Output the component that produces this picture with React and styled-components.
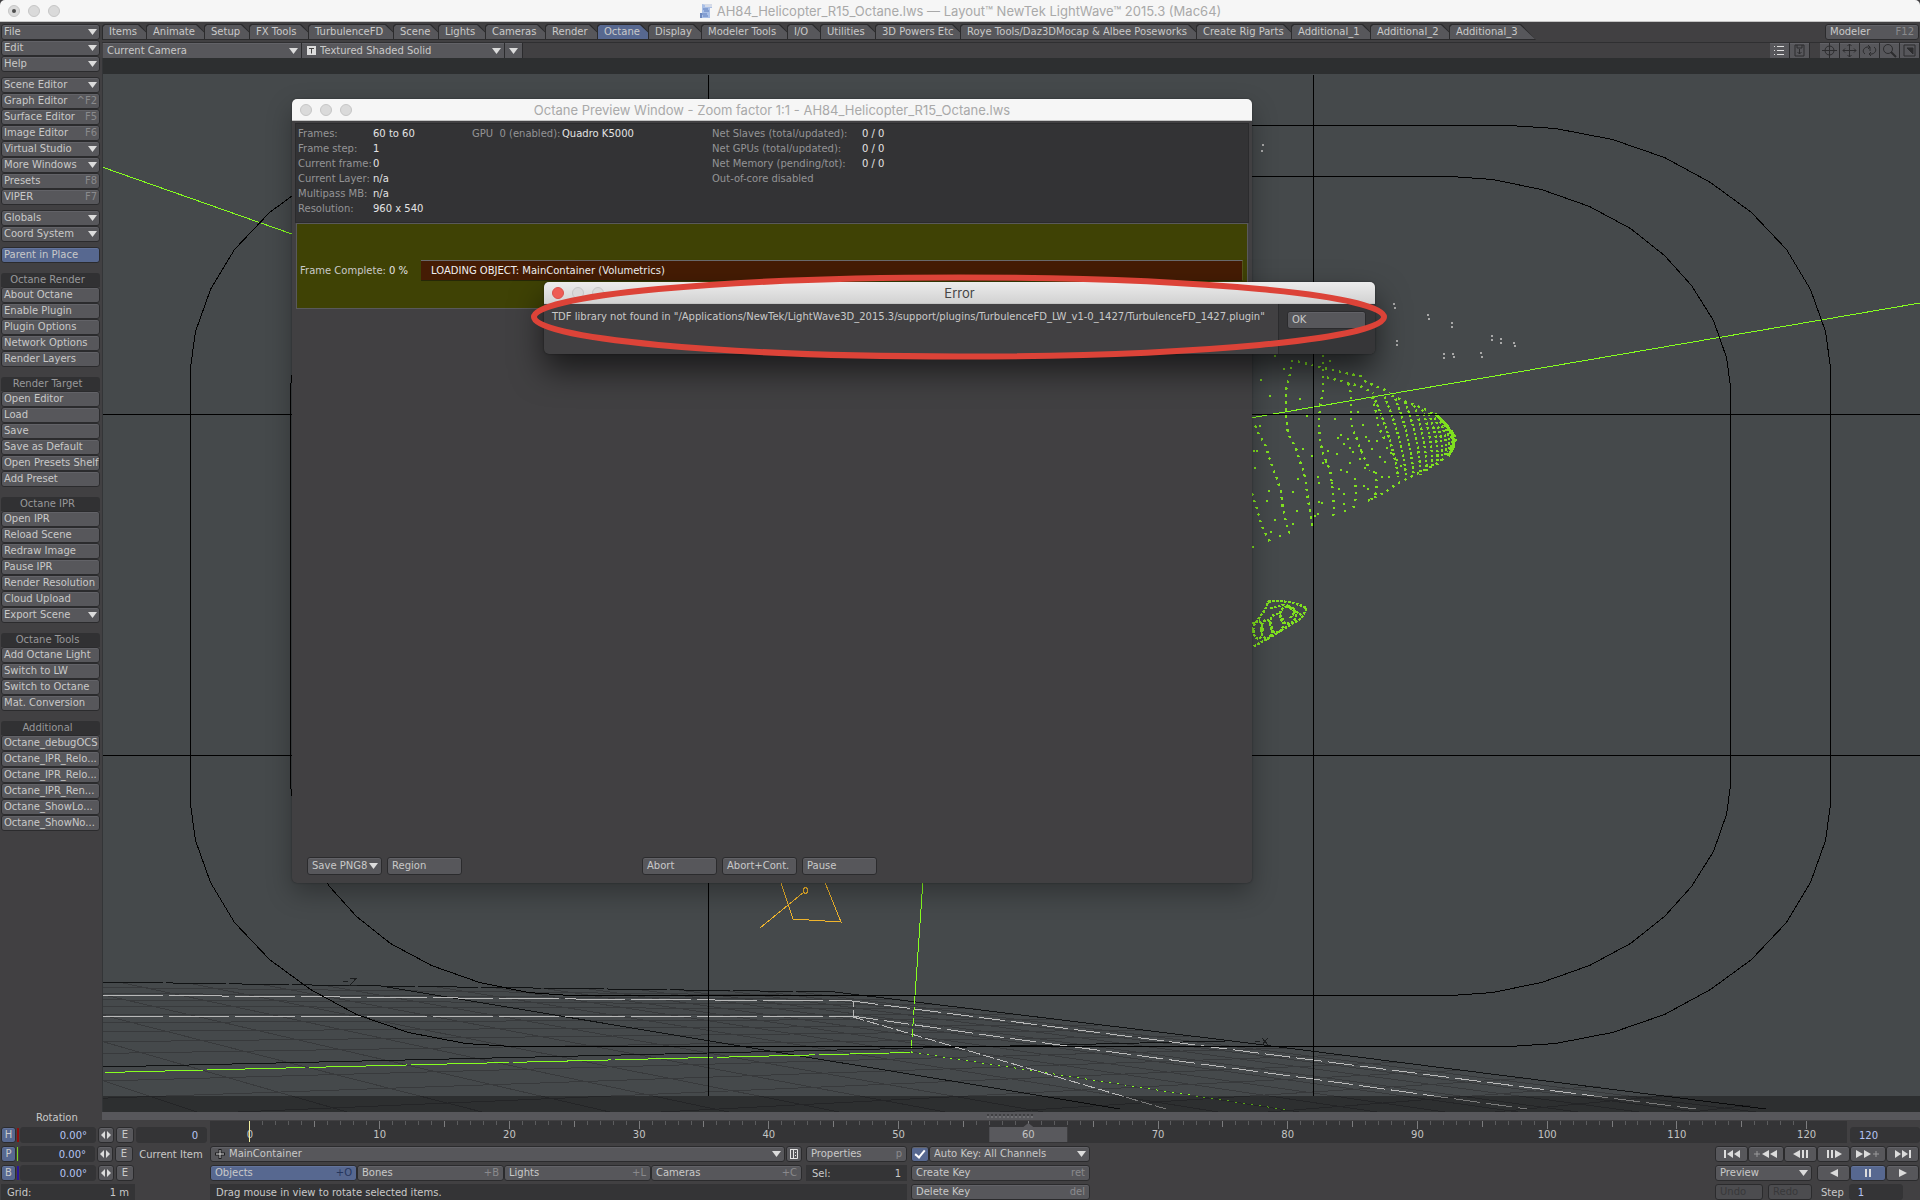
import React from "react"
import styled, { createGlobalStyle, css } from "styled-components"

const PALETTE = {
  PANEL: "#414042",
  DARK: "#343436",
  EDGE: "#2b2b2d",
  BUTTON: "#57575b",
  ACTIVE: "#576890",
  TEXT: "#c9c9c9",
  MUTED: "#8a8a8d",
  VALUE: "#b4c4f4",
  VIEW: "#45494b",
  GREEN: "#7fe01f",
}

const UI_FONT = `"DejaVu Sans", "Noto Sans", sans-serif`
const TITLE_FONT = `Inter, Roboto, sans-serif`

const GlobalStyl = createGlobalStyle`
  * {
    box-sizing: border-box;
  }

  body {
    margin: 0;
    background: ${PALETTE.PANEL};
    font-family: ${UI_FONT};
    font-size: 10px;
    color: ${PALETTE.TEXT};
  }

  button, input, select {
    font: inherit;
    color: inherit;
    margin: 0;
  }
`

const control = css`
  height: 16px;
  border: 1px solid ${PALETTE.EDGE};
  border-radius: 3px;
  background: ${PALETTE.BUTTON};
  box-shadow: inset 0 1px 0 #626267;
  color: ${PALETTE.TEXT};
`

/* ---------- shared controls ---------- */

const ButtonStyl = styled.button`
  ${control}
  display: flex;
  align-items: center;
  justify-content: ${({ $center }) => ($center ? "center" : "space-between")};
  min-width: 0;
  width: ${({ $width }) => ($width ? `${$width}px` : "auto")};
  height: ${({ $tall }) => ($tall ? 18 : 16)}px;
  padding: 0 ${({ $center, $slim }) => ($center ? 0 : $slim ? 2 : 4)}px;
  line-height: 12px;
  white-space: nowrap;
  flex: ${({ $grow }) => ($grow ? "1 1 0" : "none")};

  ${({ $active }) => $active && css`
    background: ${PALETTE.ACTIVE};
    box-shadow: inset 0 1px 0 #63749c;
  `}

  ${({ disabled }) => disabled && css`
    background: #4c4c4f;
    box-shadow: none;
    color: #38383a;
  `}
`

const ShortcutStyl = styled.span`
  color: ${({ $dark }) => ($dark ? "#26365c" : PALETTE.MUTED)};
`

const SelectBoxStyl = styled.label`
  display: grid;
  align-items: center;
  min-width: 0;
  width: ${({ $width }) => ($width ? `${$width}px` : "auto")};
  flex: ${({ $grow }) => ($grow ? "1 1 0" : "none")};

  > * {
    grid-area: 1 / 1;
  }

  > svg {
    pointer-events: none;
    justify-self: end;
    margin-right: 4px;
  }

  > span {
    pointer-events: none;
    display: flex;
    padding-left: 5px;
  }
`

const SelectStyl = styled.select`
  ${control}
  appearance: none;
  width: 100%;
  height: ${({ $tall }) => ($tall ? 18 : 16)}px;
  padding: 0 ${({ $tight }) => ($tight ? 0 : 16)}px 0 ${({ $indent }) => ($indent ? 18 : 4)}px;
  line-height: 12px;
  border-radius: ${({ $square }) => ($square ? 0 : 3)}px;
`

const Arrow = () =>
  <svg width="9" height="6" viewBox="0 0 9 6">
    <path d="M0 0H9L4.5 6Z" fill="#dcdcdc" />
  </svg>

const Select = ({ label, value, icon, width, grow, square, tall, tight }) =>
  <SelectBoxStyl $width={width} $grow={grow}>
    <SelectStyl aria-label={label} $square={square} $indent={!!icon} $tall={tall} $tight={tight}>
      <option>{value}</option>
    </SelectStyl>
    {icon && <span>{icon}</span>}
    <Arrow />
  </SelectBoxStyl>

const FieldStyl = styled.input`
  height: 16px;
  width: ${({ $width }) => $width}px;
  padding: 0 8px;
  border: 1px solid ${PALETTE.DARK};
  border-radius: 3px;
  background: ${PALETTE.DARK};
  color: ${PALETTE.VALUE};
  text-align: ${({ $left }) => ($left ? "left" : "right")};
`

/* ---------- title bars ---------- */

const TitleBarStyl = styled.header`
  display: grid;
  grid-template-columns: 1fr auto 1fr;
  align-items: center;
  height: 22px;
  padding: 0 8px;
  border-radius: 5px 5px 0 0;
  border-bottom: 1px solid #c4c4c4;
  background: ${({ $focused }) => ($focused ? "linear-gradient(#ececec, #d2d2d2)" : "#f6f6f6")};
  color: ${({ $focused }) => ($focused ? "#454545" : "#a9a9a9")};
  font-family: ${TITLE_FONT};
  font-size: 13px;
  line-height: 20px;
`

const LightsStyl = styled.div`
  display: flex;
  gap: 8px;
`

const LightStyl = styled.i`
  display: grid;
  place-items: center;
  width: 12px;
  height: 12px;
  border-radius: 50%;
  border: 1px solid ${({ $red }) => ($red ? "#d9504a" : "#c6c6c6")};
  background: ${({ $red }) => ($red ? "#ee5c54" : "#dadada")};

  &::after {
    content: "";
    display: ${({ $dot }) => ($dot ? "block" : "none")};
    width: 4px;
    height: 4px;
    border-radius: 50%;
    background: #4d4d4d;
  }
`

const TitleStyl = styled.h1`
  display: flex;
  align-items: center;
  gap: 4px;
  margin: 0;
  font-size: inherit;
  font-weight: 400;
  white-space: nowrap;
`

const DocIcon = () =>
  <svg width="14" height="18" viewBox="0 0 14 18">
    <path d="M3 2H13V6H11V16H1V11H3Z" fill="#a9bfe6" />
    <path d="M3 2H13V5H6V3Z" fill="#d5dbe8" />
    <path d="M4 7H9M5 9H10M3 12H8M4 14H9" stroke="#5f7fbe" />
    <path d="M1 11H3V16H1Z" fill="#6d88bd" />
  </svg>

const TitleBar = ({ children, focused, dot, icon }) =>
  <TitleBarStyl $focused={focused}>
    <LightsStyl>
      <LightStyl $red={focused} $dot={dot} />
      <LightStyl />
      <LightStyl />
    </LightsStyl>
    <TitleStyl>{icon}{children}</TitleStyl>
  </TitleBarStyl>

/* ---------- page frame ---------- */

const PageStyl = styled.div`
  position: relative;
  display: flex;
  flex-direction: column;
  height: 100vh;
  overflow: hidden;
  background: ${PALETTE.PANEL};
`

const BodyStyl = styled.div`
  flex: 1;
  min-height: 0;
  display: flex;
`

const SidebarStyl = styled.nav`
  display: flex;
  flex-direction: column;
  flex: none;
  width: 102px;
  padding: 2px 2px 0 1px;
`

const GroupStyl = styled.div`
  display: flex;
  flex-direction: column;
  width: 99px;
  margin-bottom: ${({ $wide }) => ($wide ? 10 : 5)}px;
`

const GroupTitleStyl = styled.h2`
  margin: 0;
  height: 14px;
  padding-right: 6px;
  border-radius: 3px 3px 0 0;
  background: #313133;
  color: #98989a;
  font-size: 10px;
  font-weight: 400;
  line-height: 14px;
  text-align: center;
`

const RotationLabelStyl = styled.div`
  margin-top: auto;
  padding-left: 35px;
  height: 8px;
  line-height: 12px;
`

const MainStyl = styled.main`
  flex: 1;
  min-width: 0;
  display: flex;
  flex-direction: column;
`

const GROUPS = [
  { items: [["File", "v"], ["Edit", "v"], ["Help", "v"]] },
  {
    items: [
      ["Scene Editor", "v"], ["Graph Editor", "^F2"], ["Surface Editor", "F5"], ["Image Editor", "F6"],
      ["Virtual Studio", "v"], ["More Windows", "v"], ["Presets", "F8"], ["VIPER", "F7"],
    ],
  },
  { items: [["Globals", "v"], ["Coord System", "v"]] },
  { items: [["Parent in Place", "", true]], wide: true },
  {
    title: "Octane Render",
    items: [["About Octane"], ["Enable Plugin"], ["Plugin Options"], ["Network Options"], ["Render Layers"]],
    wide: true,
  },
  {
    title: "Render Target",
    items: [["Open Editor"], ["Load"], ["Save"], ["Save as Default"], ["Open Presets Shelf"], ["Add Preset"]],
    wide: true,
  },
  {
    title: "Octane IPR",
    items: [
      ["Open IPR"], ["Reload Scene"], ["Redraw Image"], ["Pause IPR"],
      ["Render Resolution"], ["Cloud Upload"], ["Export Scene", "v"],
    ],
    wide: true,
  },
  {
    title: "Octane Tools",
    items: [["Add Octane Light"], ["Switch to LW"], ["Switch to Octane"], ["Mat. Conversion"]],
    wide: true,
  },
  {
    title: "Additional",
    items: [
      ["Octane_debugOCS"], ["Octane_IPR_Relo..."], ["Octane_IPR_Relo..."],
      ["Octane_IPR_Ren..."], ["Octane_ShowLo..."], ["Octane_ShowNo..."],
    ],
    wide: true,
  },
]

const Sidebar = () =>
  <SidebarStyl>
    {GROUPS.map(({ title, items, wide }, i) =>
      <GroupStyl key={i} $wide={wide}>
        {title && <GroupTitleStyl>{title}</GroupTitleStyl>}
        {items.map(([name, hint, active], j) =>
          <ButtonStyl key={j} $slim $active={active}>
            <span>{name}</span>
            {hint === "v" ? <Arrow /> : hint && <ShortcutStyl>{hint}</ShortcutStyl>}
          </ButtonStyl>
        )}
      </GroupStyl>
    )}
    <RotationLabelStyl>Rotation</RotationLabelStyl>
  </SidebarStyl>

/* ---------- tabs ---------- */

const TabRowStyl = styled.div`
  display: flex;
  align-items: flex-start;
  height: 21px;
  padding: 2px 1px 0 0;
  border-bottom: 1px solid #2f2f31;
`

const TabListStyl = styled.div`
  display: flex;
  flex: 1;
`

const TabStyl = styled.button`
  position: relative;
  z-index: 0;
  flex: none;
  width: ${({ $width }) => $width}px;
  height: 16px;
  padding: 0 0 0 7px;
  border: 0;
  background: none;
  text-align: left;
  line-height: 16px;
  white-space: nowrap;

  &::before,
  &::after {
    content: "";
    position: absolute;
    inset: 0 -8px 0 0;
    clip-path: polygon(2px 0, calc(100% - 15px) 0, 100% 100%, 0 100%, 0 2px);
  }

  &::before {
    z-index: -2;
    background: ${PALETTE.EDGE};
  }

  &::after {
    z-index: -1;
    inset: 1px -7px 1px 1px;
    background: ${({ $active }) => ($active ? PALETTE.ACTIVE : PALETTE.BUTTON)};
  }
`

const TABS = [
  ["Items", 44], ["Animate", 58], ["Setup", 45], ["FX Tools", 59], ["TurbulenceFD", 85], ["Scene", 45],
  ["Lights", 47], ["Cameras", 60], ["Render", 52], ["Octane", 51], ["Display", 53], ["Modeler Tools", 86],
  ["I/O", 33], ["Utilities", 55], ["3D Powers Etc", 85], ["Roye Tools/Daz3DMocap & Albee Poseworks", 236],
  ["Create Rig Parts", 95], ["Additional_1", 79], ["Additional_2", 79], ["Additional_3", 79],
]

const Tabs = () =>
  <TabRowStyl>
    <TabListStyl role="tablist">
      {TABS.map(([name, width]) =>
        <TabStyl key={name} role="tab" aria-selected={name === "Octane"} $width={width} $active={name === "Octane"}>
          {name}
        </TabStyl>
      )}
    </TabListStyl>
    <ButtonStyl $width={94}>
      Modeler <ShortcutStyl>F12</ShortcutStyl>
    </ButtonStyl>
  </TabRowStyl>

/* ---------- viewport header ---------- */

const ViewBarStyl = styled.div`
  display: flex;
  height: 15px;
  padding-left: 1px;

  select, button {
    height: 15px;
    border-width: 0 1px 0 0;
    border-radius: 0;
  }
`

const IconGroupStyl = styled.div`
  display: flex;
  margin-left: ${({ $push }) => ($push ? "auto" : "10px")};
`

const TextureIcon = () =>
  <svg width="9" height="9" viewBox="0 0 9 9">
    <rect width="9" height="9" fill="#dcdcdc" />
    <path d="M2 2.5H7M4.5 2.5V7.5" stroke="#444" />
  </svg>

const VIEW_ICONS = {
  save: <path d="M3 2H12V13H3ZM5 2V5H10V2M7.5 6V11M5.5 9L7.5 11L9.5 9" />,
  target: <><circle cx="7.500" cy="7.500" r="4.500" /><path d="M7.500 0V15M0 7.500H15" /></>,
  move: <path d="M7.500 1V14M1 7.500H14M5.500 3L7.500 1L9.500 3M5.500 12L7.500 14L9.500 12M3 5.500L1 7.500L3 9.500M12 5.500L14 7.500L12 9.500" />,
  rotate: <path d="M3 11C0 9 1 5 5 4H8M6 2L8 4L6 6M12 4C15 6 14 10 10 11H7M9 9L7 11L9 13M8 4V8" />,
  zoom: <><circle cx="6" cy="6" r="4.500" /><path d="M9 9L14 14" strokeWidth="2" /></>,
  max: <><path d="M2 2H13V13H2Z" /><path d="M5 5H11V11Z" fill="#2c2c2e" /></>,
}

const ViewIcon = ({ name }) =>
  <ButtonStyl $center $width={20} aria-label={name}>
    <svg width="15" height="15" viewBox="0 0 15 15" fill="none" stroke="#2c2c2e">{VIEW_ICONS[name]}</svg>
  </ButtonStyl>

const ViewBar = () =>
  <ViewBarStyl>
    <Select label="View" value="Current Camera" width={199} />
    <Select label="Shading" value="Textured Shaded Solid" width={203} icon={<TextureIcon />} />
    <ButtonStyl $center $width={18} aria-label="Shading options"><Arrow /></ButtonStyl>
    <IconGroupStyl $push>
      <ButtonStyl $center $width={20} aria-label="List">
        <svg width="11" height="9" viewBox="0 0 11 9" stroke="#dedede" shapeRendering="crispEdges">
          <path d="M0 .5H1M3 .5H10M0 4.500H1M3 4.500H10M0 8.500H1M3 8.500H10" />
        </svg>
      </ButtonStyl>
      <ViewIcon name="save" />
    </IconGroupStyl>
    <IconGroupStyl>
      {["target", "move", "rotate", "zoom", "max"].map(n => <ViewIcon key={n} name={n} />)}
    </IconGroupStyl>
  </ViewBarStyl>

/* ---------- 3D scene ---------- */

const SceneStyl = styled.div`
  flex: 1;
  min-height: 0;
  display: flex;
  background: ${PALETTE.VIEW};
  border-left: 1px solid #333537;

  svg {
    flex: 1;
    min-width: 0;
    height: 100%;
  }
`

const SplitterStyl = styled.div`
  flex: none;
  display: grid;
  place-items: center;
  height: 8px;
  background: ${PALETTE.BUTTON};
`

// projects the ground plane, (0,0) is the origin and (1,1) the far corner
const groundProjection = ([x0, y0], [x1, y1], [x2, y2], [x3, y3]) => {
  const dx1 = x1 - x2, dx2 = x3 - x2, sx = x0 - x1 + x2 - x3
  const dy1 = y1 - y2, dy2 = y3 - y2, sy = y0 - y1 + y2 - y3
  const det = dx1 * dy2 - dx2 * dy1
  const g = (sx * dy2 - dx2 * sy) / det
  const h = (dx1 * sy - sx * dy1) / det
  const w = (u, v) => g * u + h * v + 1

  return {
    w,
    point: (u, v) => [
      ((x1 - x0 + g * x1) * u + (x3 - x0 + h * x3) * v + x0) / w(u, v),
      ((y1 - y0 + g * y1) * u + (y3 - y0 + h * y3) * v + y0) / w(u, v),
    ],
  }
}

const ground = groundProjection([775, 1052], [1240, 1042], [835, 992], [381, 986])

const groundLine = (at) => {
  const [u1, v1] = at(1)
  let t = -1
  while (t < 1 && ground.w(...at(t)) < 0.15) t += 0.02
  return `M${ground.point(u1, v1).map(Math.round)}L${ground.point(...at(t)).map(Math.round)}`
}

const GRID = []
for (let i = -10; i < 10; i++) {
  if (i === 0) continue
  GRID.push(groundLine(t => [i / 10, t]), groundLine(t => [t, i / 10]))
}

const OUTER = [[321, 0], [275, 3], [218, 14], [166, 32], [120, 57], [79, 87], [44, 124], [20, 164], [5, 206], [0, 242]]
const INNER = [[279, 0], [238, 3], [189, 13], [141, 30], [100, 52], [66, 79], [39, 109], [17, 144], [4, 181], [0, 210]]

const safeArea = (corner, l, t, r, b) => {
  const back = [...corner].reverse()
  return [
    ...corner.map(([x, y]) => [r - x, t + y]),
    ...back.map(([x, y]) => [r - x, b - y]),
    ...corner.map(([x, y]) => [l + x, b - y]),
    ...back.map(([x, y]) => [l + x, t + y]),
  ].join(" ")
}

// nose of the hull, in thirds of a pixel like the rest of the point cloud
const NOSE = Array.from({ length: 14 }, (_, i) => {
  const e = 1 - (1 - i / 13) ** 2
  const tx = 400 + 235 * e, ty = 348 + 105 * e * e
  const bx = 475 + 165 * e, by = 592 - 100 * e ** 3
  return `M${tx | 0},${ty | 0}Q${((tx + bx) / 2 + 18) | 0},${(470 + 10 * e) | 0} ${bx | 0},${by | 0}`
})

const CLOUD = [
  "M45,437L57,465L75,492L90,540L110,594L123,635L128,680L138,725L144,755L162,766",
  "M156,240L150,280L138,330V410L144,460L168,505L180,545L195,585L203,655L213,710L218,742",
  "M250,225V330L240,380L237,430L240,480L249,520L270,570L279,635L282,680L279,718",
  "M325,310L333,340V430L345,465L369,525L390,572",
  "M345,594L348,650L342,680L330,692",
  "M396,350L410,405L415,440L440,490",
  "M408,575L410,625L405,650L384,664",
  "M174,244L235,260L300,275L363,289L378,306L450,336",
  "M260,292L320,308L360,318L400,340",
  "M36,640L50,684L66,740L90,786L100,786",
  "M384,662L430,640L470,612L510,592L545,575L600,545L630,515L642,485",
  "M455,347L510,370L550,385L590,408L620,435L638,465L642,490",
]

const POD = [
  "M36,1030L50,1025L75,990L85,965L110,962L150,967L180,975L200,985L185,1015L150,1035L110,1060L80,1078L40,1100",
  "M90,1030a20,28 0 1 0 40,0a20,28 0 1 0 -40,0",
  "M64,1048a16,28 0 1 0 32,0a16,28 0 1 0 -32,0",
  "M120,1005a24,26 0 1 0 48,0a24,26 0 1 0 -48,0",
  "M40,1050a14,26 0 1 0 28,0a14,26 0 1 0 -28,0",
  "M90,985L130,975L160,990L185,1005",
  "M140,975L165,995L150,1015",
]

const STRAY = [
  [105, 228], [132, 267], [270, 242], [63, 300], [90, 348], [180, 357], [60, 437], [201, 408], [285, 416], [354, 396],
  [369, 435], [303, 465], [312, 492], [294, 474], [324, 477], [216, 528], [189, 507], [45, 564], [87, 632], [81, 662],
  [159, 636], [173, 597], [237, 609], [237, 666], [246, 668], [276, 608], [297, 628], [312, 641], [312, 671], [315, 692],
  [303, 570], [321, 576], [330, 549], [339, 516], [363, 510], [387, 482], [396, 506], [420, 531], [435, 546], [447, 591],
  [426, 591], [360, 537], [375, 564], [402, 576], [258, 545], [249, 550], [264, 513], [291, 521], [234, 592], [192, 585],
  [171, 693], [234, 702], [225, 708], [159, 731], [105, 720], [93, 756], [120, 768], [39, 801], [51, 513], [42, 513],
  [470, 540], [482, 558], [384, 628], [372, 618], [441, 503], [453, 518], [411, 483], [378, 472], [351, 474], [330, 503],
]

const LIGHTS = [
  [462, 72], [465, 84], [564, 104], [567, 117], [636, 129], [636, 141], [471, 183], [471, 195], [756, 168], [756, 180],
  [783, 177], [783, 189], [822, 189], [825, 198], [612, 222], [612, 234], [639, 222], [642, 231], [723, 219], [726, 231],
  [69, -405], [66, -387],
]

const Dots = ({ points, fill }) =>
  <g fill={fill}>
    {points.map(([x, y], i) => <rect key={i} x={x - 3} y={y - 3} width="6" height="6" />)}
  </g>

const Scene = () =>
  <SceneStyl>
    <svg viewBox="103 58 1817 1054" preserveAspectRatio="none" fill="none" shapeRendering="crispEdges">
      <path d={GRID.join("")} stroke="#383a3c" />

      <g stroke="#101213">
        <path d="M103 982L381 986L835 992" strokeDasharray="60 3" />
        <path d="M835 992L1240 1042L1766 1109" />
        <path d="M103 1067L708 1053L1226 1041M381 986L794 1055L1000 1089L1120 1109" />
      </g>
      <g stroke="#b9b9b9">
        <path d="M103 995L576 999L852 1001M103 1017L852 1016" strokeDasharray="60 6" />
        <path d="M852 1001L1000 1020L1313 1060L1696 1109M852 1016L1000 1037L1313 1079L1527 1109" strokeDasharray="26 6" />
        <path d="M853 1001V1017" strokeDasharray="6 3" />
        <path d="M853 1017L1000 1060L1166 1109" strokeDasharray="12 3" />
      </g>
      <g stroke="#86ff1f">
        <path d="M105 1072.500L910 1052.500" strokeDasharray="98 4" />
        <path d="M911 1052L1287 1110" strokeDasharray="2 6" />
        <path d="M923 880L915 996" />
        <path d="M915 996L911 1052" strokeDasharray="8 3" />
        <path d="M102 167L292 234M1250 418L1920 303" />
      </g>

      <g stroke="#efb42c">
        <path d="M780 880L793 919L841 922L824 880M760 928L804 892" />
        <ellipse cx="805.500" cy="890.500" rx="2" ry="3" />
      </g>

      <g transform="translate(1240 280) scale(.33333)" stroke={PALETTE.GREEN} strokeWidth="7">
        <path d={CLOUD.join("")} strokeDasharray="7 14" />
        <path d={NOSE.join("")} strokeDasharray="7 7" />
        <path d="M585 400L620 435L638 465L641 500L625 528" strokeWidth="9" />
        <path d={POD.join("")} strokeDasharray="8 4" />
        <g stroke="none">
          <Dots points={STRAY} fill={PALETTE.GREEN} />
          <Dots points={LIGHTS} fill="#a8a8a8" />
        </g>
      </g>

      <g stroke="#000">
        <path d="M708.500 75V1096M1313.500 75V1096M103 414.500H1920M103 755.500H1920" />
        <polygon points={safeArea(OUTER, 190.5, 125.5, 1830.5, 1046.5)} />
        <polygon points={safeArea(INNER, 290.5, 176.5, 1730.5, 995.5)} />
      </g>
      <g stroke="#1b1d1e">
        <path d="M343 981.500H348M350 978.500H356L350 985.500H357M1255 1041.500H1260M1262 1038L1268 1045M1268 1038L1262 1045" />
      </g>
      <path d="M103 58H1920V74H103ZM103 1096H1920V1112H103Z" fill="#000" fillOpacity=".35" />
    </svg>
  </SceneStyl>

/* ---------- footer ---------- */

const FooterStyl = styled.footer`
  flex: none;
  display: flex;
  height: 80px;
`

const ChannelsStyl = styled.section`
  flex: none;
  display: flex;
  flex-direction: column;
  gap: 3px;
  width: 210px;
  padding: 7px 3px 0 1px;
`

const RowStyl = styled.div`
  display: flex;
  align-items: center;
  height: 16px;
  gap: ${({ $gap = 0 }) => $gap}px;
`

const ChannelBarStyl = styled.i`
  width: 2px;
  height: 14px;
  margin: 0 1px;
  background: ${({ $color }) => $color};
`

const ItemLabelStyl = styled.span`
  width: 72px;
  text-align: center;
  white-space: nowrap;
`

const ReadoutStyl = styled.div`
  display: flex;
  align-items: center;
  justify-content: space-between;
  flex: ${({ $grow }) => ($grow ? "1 1 0" : "none")};
  width: ${({ $width }) => ($width ? `${$width}px` : "auto")};
  height: 16px;
  padding: 0 6px;
  background: ${PALETTE.DARK};
  white-space: nowrap;
`

const ControlsStyl = styled.section`
  flex: 1;
  min-width: 0;
  display: flex;
  flex-direction: column;
  gap: 3px;
  padding-top: 1px;
`

const TimelineStyl = styled.div`
  display: flex;
  align-items: flex-end;
  gap: 3px;
  height: 22px;
`

const RulerStyl = styled.svg`
  flex: 1;
  min-width: 0;
  height: 22px;
  background: ${PALETTE.DARK};
  font-family: ${UI_FONT};
  font-size: 10px;
`

const DeckStyl = styled.div`
  display: flex;
  justify-content: space-between;
`

const DeckColumnStyl = styled.div`
  display: flex;
  flex-direction: column;
  gap: 3px;
  width: ${({ $width }) => $width}px;
`

const DeckLeftStyl = styled.div`
  display: flex;
  gap: 4px;
`

const CheckStyl = styled.input`
  ${control}
  appearance: none;
  flex: none;
  width: 18px;
  background: ${PALETTE.ACTIVE};
  display: grid;
  place-items: center;

  &:checked::after {
    content: "";
    width: 4px;
    height: 8px;
    margin-bottom: 2px;
    border: solid #fff;
    border-width: 0 2px 2px 0;
    transform: rotate(40deg);
  }
`

const frameX = f => `${((40 + f * 12.98) / 1638) * 100}%`
const frames = Array.from({ length: 121 }, (_, f) => f)

const Ruler = () =>
  <RulerStyl>
    {frames.map(f =>
      <line
        key={f}
        x1={frameX(f)}
        x2={frameX(f)}
        y1="0"
        y2={f % 10 === 0 ? 8 : f % 5 === 0 ? 6 : 4}
        stroke={f % 5 === 0 ? "#7c7c7e" : "#5c5c5e"}
        shapeRendering="crispEdges"
      />
    )}
    <svg x={frameX(60)} overflow="visible">
      <path d="M-39 6H-5L0 2L5 6H39V21H-39Z" fill="#59595d" />
    </svg>
    {frames.filter(f => f % 10 === 0).map(f =>
      <text key={f} x={frameX(f)} y="17" textAnchor="middle" fill="#c4c4c4">{f}</text>
    )}
    <line x1={frameX(0)} x2={frameX(0)} y1="0" y2="21" stroke="#f3f0a0" shapeRendering="crispEdges" />
  </RulerStyl>

const CHANNELS = [["H", "#8c0f0f"], ["P", "#7ad324"], ["B", "#2c1696"]]

const Channels = () =>
  <ChannelsStyl>
    {CHANNELS.map(([name, color], i) =>
      <RowStyl key={name}>
        <ButtonStyl $center $active $width={15}>{name}</ButtonStyl>
        <ChannelBarStyl $color={color} />
        <FieldStyl $width={76} aria-label={`Rotation ${name}`} defaultValue="0.00°" />
        <RowStyl as="span" $gap={2}>
          <i />
          <ButtonStyl $center $width={16} aria-label={`Step ${name}`}>
            <svg width="10" height="8" viewBox="0 0 10 8" fill="#dcdcdc"><path d="M4 0V8L0 4ZM6 0L10 4L6 8Z" /></svg>
          </ButtonStyl>
          <ButtonStyl $center $width={18}>E</ButtonStyl>
          {i === 0 && <FieldStyl $width={71} aria-label="Frame" defaultValue="0" />}
          {i === 1 && <ItemLabelStyl>Current Item</ItemLabelStyl>}
        </RowStyl>
      </RowStyl>
    )}
    <ReadoutStyl $width={134}><span>Grid:</span><span>1 m</span></ReadoutStyl>
  </ChannelsStyl>

const TRANSPORT = {
  first: <path d="M1 1H3V9H1ZM10 1V9L4 5ZM17 1V9L11 5Z" />,
  prevKey: <><path d="M0 4.500H6V5.500H0ZM2.500 2H3.500V8H2.500Z" fill="#9a9a9c" /><path d="M15 1V9L8 5ZM23 1V9L16 5Z" /></>,
  prev: <path d="M8 1V9L1 5ZM10 1H12V9H10ZM14 1H16V9H14Z" />,
  next: <path d="M2 1H4V9H2ZM6 1H8V9H6ZM10 1L17 5L10 9Z" />,
  nextKey: <><path d="M0 1L7 5L0 9ZM8 1L15 5L8 9Z" /><path d="M17 4.500H23V5.500H17ZM19.500 2H20.500V8H19.500Z" fill="#9a9a9c" /></>,
  last: <path d="M1 1L7 5L1 9ZM8 1L14 5L8 9ZM15 1H17V9H15Z" />,
  back: <path d="M13 1V9L5 5Z" />,
  pause: <path d="M6 1H8V9H6ZM10 1H12V9H10Z" />,
  play: <path d="M5 1L13 5L5 9Z" />,
}

const TransportButton = ({ name, width, active }) => {
  const w = /Key/.test(name) ? 24 : 18
  return (
    <ButtonStyl $center $width={width} $active={active} aria-label={name}>
      <svg width={w} height="10" viewBox={`0 0 ${w} 10`} fill="#dcdcdc">{TRANSPORT[name]}</svg>
    </ButtonStyl>
  )
}

const ItemIcon = () =>
  <svg width="10" height="10" viewBox="0 0 10 10">
    <path d="M5 0V10M0 5H10" stroke="#1c1c1e" strokeWidth="3" />
    <path d="M5 1V9M1 5H9" stroke="#dcdcdc" />
  </svg>

const Footer = () =>
  <FooterStyl>
    <Channels />
    <ControlsStyl>
      <TimelineStyl>
        <Ruler />
        <FieldStyl $left $width={70} aria-label="Last frame" defaultValue="120" />
      </TimelineStyl>
      <DeckStyl>
        <DeckLeftStyl>
          <DeckColumnStyl $width={697}>
            <RowStyl $gap={4}>
              <RowStyl as="span" $gap={1}>
                <Select label="Current Item" value="MainContainer" width={575} icon={<ItemIcon />} />
                <ButtonStyl $center $width={16} aria-label="Item list">
                  <svg width="8" height="10" viewBox="0 0 8 10">
                    <path d="M.5 .5H7.500V9.500H.5Z" fill="none" stroke="#e4e4e4" />
                    <path d="M0 0H4V10H0Z" fill="#e4e4e4" />
                    <path d="M1 1H3V9H1Z" fill="#57575b" />
                    <path d="M5 3H6V4H5ZM5 6H6V7H5Z" fill="#e4e4e4" />
                  </svg>
                </ButtonStyl>
              </RowStyl>
              <ButtonStyl $grow>Properties <ShortcutStyl>p</ShortcutStyl></ButtonStyl>
            </RowStyl>
            <RowStyl $gap={4}>
              <RowStyl as="span">
                <ButtonStyl $active $width={147}>Objects <ShortcutStyl $dark>+O</ShortcutStyl></ButtonStyl>
                <ButtonStyl $width={147}>Bones <ShortcutStyl>+B</ShortcutStyl></ButtonStyl>
                <ButtonStyl $width={147}>Lights <ShortcutStyl>+L</ShortcutStyl></ButtonStyl>
                <ButtonStyl $width={151}>Cameras <ShortcutStyl>+C</ShortcutStyl></ButtonStyl>
              </RowStyl>
              <ReadoutStyl $grow><span>Sel:</span><span>1</span></ReadoutStyl>
            </RowStyl>
            <ReadoutStyl>Drag mouse in view to rotate selected items.</ReadoutStyl>
          </DeckColumnStyl>
          <DeckColumnStyl $width={179}>
            <RowStyl>
              <CheckStyl type="checkbox" defaultChecked aria-label="Auto Key" />
              <Select label="Auto Key" value="Auto Key: All Channels" grow />
            </RowStyl>
            <ButtonStyl>Create Key <ShortcutStyl>ret</ShortcutStyl></ButtonStyl>
            <ButtonStyl>Delete Key <ShortcutStyl>del</ShortcutStyl></ButtonStyl>
          </DeckColumnStyl>
        </DeckLeftStyl>
        <DeckColumnStyl $width={205}>
          <RowStyl>
            <TransportButton name="first" width={33} />
            <TransportButton name="prevKey" width={36} />
            <TransportButton name="prev" width={33} />
            <TransportButton name="next" width={33} />
            <TransportButton name="nextKey" width={36} />
            <TransportButton name="last" width={33} />
          </RowStyl>
          <RowStyl>
            <Select label="Preview" value="Preview" width={97} />
            <RowStyl as="span" $gap={5}>
              <i />
              <RowStyl as="span">
                <TransportButton name="back" width={33} />
                <TransportButton name="pause" width={36} active />
                <TransportButton name="play" width={33} />
              </RowStyl>
            </RowStyl>
          </RowStyl>
          <RowStyl $gap={5}>
            <ButtonStyl disabled $width={48}>Undo</ButtonStyl>
            <ButtonStyl disabled $width={44}>Redo</ButtonStyl>
            <RowStyl as="label" htmlFor="step" $gap={4}>
              <i />
              Step
            </RowStyl>
            <FieldStyl id="step" $left $width={54} defaultValue="1" />
          </RowStyl>
        </DeckColumnStyl>
      </DeckStyl>
    </ControlsStyl>
  </FooterStyl>

/* ---------- floating windows ---------- */

const WindowStyl = styled.section`
  position: absolute;
  left: ${({ $left }) => $left}px;
  top: ${({ $top }) => $top}px;
  width: ${({ $width }) => $width}px;
  display: flex;
  flex-direction: column;
  border-radius: 5px;
  background: ${PALETTE.PANEL};
  box-shadow: ${({ $focused }) => ($focused
    ? "0 16px 32px rgba(0, 0, 0, .6), 0 0 2px rgba(0, 0, 0, .5)"
    : "0 10px 26px rgba(0, 0, 0, .3), 0 0 2px rgba(0, 0, 0, .4)")};
`

const InfoStyl = styled.div`
  display: grid;
  grid-template-columns: 174px 240px 1fr;
  height: 100px;
  margin: 2px 3px 0;
  padding: 2px;
  border: 1px solid #2b2b2d;
  background: #333335;
  color: #939395;
`

const FactsStyl = styled.dl`
  display: grid;
  grid-template-columns: ${({ $label }) => $label}px 1fr;
  grid-auto-rows: 15px;
  align-content: start;
  margin: 0;
  line-height: 15px;
  white-space: pre;

  dd {
    margin: 0;
    color: #e4e4e4;
  }
`

const ProgressStyl = styled.div`
  display: flex;
  align-items: center;
  height: 86px;
  margin: 0 4px;
  padding: 8px 4px 0 3px;
  border: 1px solid #59595b;
  background: #3f4205;
`

const ProgressLabelStyl = styled.span`
  flex: none;
  width: 121px;
  white-space: pre;

  b {
    font-weight: 400;
    color: #e4e4e4;
  }
`

const ProgressBarStyl = styled.div`
  flex: 1;
  height: 21px;
  padding-left: 10px;
  border-top: 1px solid #6a6a6c;
  border-right: 1px solid #55551c;
  border-bottom: 1px solid #262807;
  background: #451c04;
  color: #f0f0f0;
  line-height: 19px;
`

const CanvasStyl = styled.div`
  height: 548px;
`

const ActionsStyl = styled.div`
  display: flex;
  gap: 5px;
  padding: 0 0 8px 15px;
`

const ActionGroupStyl = styled.div`
  display: flex;
  gap: 5px;
  width: 330px;
`

const FACTS = [
  ["Frames:", "60 to 60"], ["Frame step:", "1"], ["Current frame:", "0"],
  ["Current Layer:", "n/a"], ["Multipass MB:", "n/a"], ["Resolution:", "960 x 540"],
]
const NET = [
  ["Net Slaves (total/updated):", "0 / 0"], ["Net GPUs (total/updated):", "0 / 0"],
  ["Net Memory (pending/tot):", "0 / 0"], ["Out-of-core disabled", ""],
]

const Facts = ({ rows, label }) =>
  <FactsStyl $label={label}>
    {rows.map(([name, value]) =>
      <React.Fragment key={name}>
        <dt>{name}</dt>
        <dd>{value}</dd>
      </React.Fragment>
    )}
  </FactsStyl>

const PreviewWindow = () =>
  <WindowStyl $left={292} $top={99} $width={960}>
    <TitleBar>Octane Preview Window - Zoom factor 1:1 - AH84_Helicopter_R15_Octane.lws</TitleBar>
    <InfoStyl>
      <Facts rows={FACTS} label={75} />
      <Facts rows={[["GPU  0 (enabled):", "Quadro K5000"]]} label={90} />
      <Facts rows={NET} label={150} />
    </InfoStyl>
    <ProgressStyl>
      <ProgressLabelStyl>Frame Complete: <b>0 %</b></ProgressLabelStyl>
      <ProgressBarStyl>LOADING OBJECT: MainContainer (Volumetrics)</ProgressBarStyl>
    </ProgressStyl>
    <CanvasStyl />
    <ActionsStyl>
      <ActionGroupStyl>
        <Select label="Save format" value="Save PNG8" width={75} tall tight />
        <ButtonStyl $tall $width={75}>Region</ButtonStyl>
      </ActionGroupStyl>
      <ButtonStyl $tall $width={75}>Abort</ButtonStyl>
      <ButtonStyl $tall $width={75}>Abort+Cont.</ButtonStyl>
      <ButtonStyl $tall $width={75}>Pause</ButtonStyl>
    </ActionsStyl>
  </WindowStyl>

const ErrorBodyStyl = styled.div`
  display: flex;
  height: 50px;
`

const MessageStyl = styled.p`
  flex: 1;
  margin: 0;
  padding: 5px 0 0 8px;
  line-height: 15px;
  white-space: nowrap;
`

const AnswerStyl = styled.div`
  width: 97px;
  padding: 7px 8px;
  border-left: 1px solid #2b2b2d;
  border-radius: 0 0 5px 0;
  background: #363638;
`

const MarkStyl = styled.svg`
  position: absolute;
  left: -14px;
  top: -9px;
  width: 858px;
  height: 88px;
  pointer-events: none;
`

const ErrorWindow = () =>
  <WindowStyl role="alertdialog" aria-label="Error" $focused $left={544} $top={282} $width={831}>
    <TitleBar focused>Error</TitleBar>
    <ErrorBodyStyl>
      <MessageStyl>
        TDF library not found in "/Applications/NewTek/LightWave3D_2015.3/support/plugins/TurbulenceFD_LW_v1-0_1427/TurbulenceFD_1427.plugin"
      </MessageStyl>
      <AnswerStyl>
        <ButtonStyl $tall $width={79}>OK</ButtonStyl>
      </AnswerStyl>
    </ErrorBodyStyl>
    <MarkStyl viewBox="0 0 858 88">
      <ellipse cx="429" cy="44" rx="425" ry="39.500" fill="none" stroke="#dc4338" strokeWidth="6" />
    </MarkStyl>
  </WindowStyl>

const App = () =>
  <PageStyl>
    <GlobalStyl />
    <TitleBar dot icon={<DocIcon />}>
      AH84_Helicopter_R15_Octane.lws — Layout™ NewTek LightWave™ 2015.3 (Mac64)
    </TitleBar>
    <BodyStyl>
      <Sidebar />
      <MainStyl>
        <Tabs />
        <ViewBar />
        <Scene />
        <SplitterStyl>
          <svg width="48" height="4" viewBox="0 0 48 4" stroke="#2a2a2c" strokeDasharray="2 2">
            <path d="M0 1H48" /><path d="M0 3H48" stroke="#858588" />
          </svg>
        </SplitterStyl>
      </MainStyl>
    </BodyStyl>
    <Footer />
    <PreviewWindow />
    <ErrorWindow />
  </PageStyl>

export default App
